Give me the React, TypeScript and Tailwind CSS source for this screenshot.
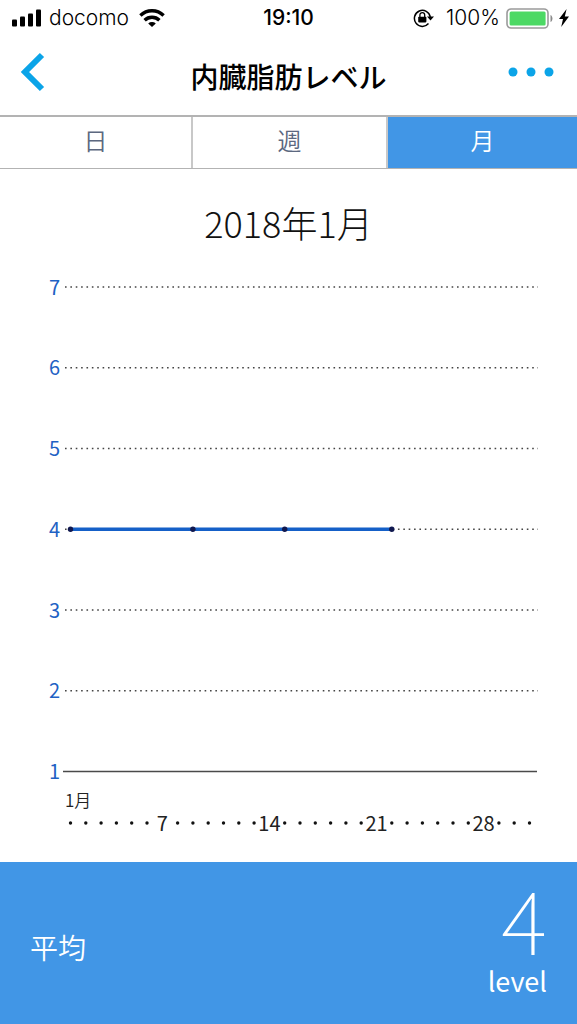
import { useState } from 'react'

const TABS = ['日', '週', '月']

const LEVELS = [7, 6, 5, 4, 3, 2, 1]
const DAYS = Array.from({ length: 31 }, (_, i) => i + 1)

const READINGS = [
  { day: 1, level: 4 },
  { day: 9, level: 4 },
  { day: 15, level: 4 },
  { day: 22, level: 4 },
]

const dayX = (day: number) => 70.5 + (day - 1) * 15.3
const levelY = (level: number) => 27 + (7 - level) * 80.75

function StatusBar() {
  return (
    <div className="grid h-9 grid-cols-[1fr_auto_1fr] items-center px-2 font-['Inter',sans-serif] text-[21px] leading-6 text-black">
      <div className="flex items-center gap-2 pl-1">
        <svg width="29" height="18" viewBox="0 0 29 18" aria-hidden="true">
          <rect x="0" y="10.5" width="5" height="7" rx="1" />
          <rect x="8" y="7.5" width="5" height="10" rx="1" />
          <rect x="16" y="4.5" width="5" height="13" rx="1" />
          <rect x="24" y="0.5" width="5" height="17" rx="1" />
        </svg>
        <span className="font-[350]">docomo</span>
        <svg width="26" height="18" viewBox="0 0 26 18" className="ml-0.5" fill="none" stroke="#000" strokeWidth="3.4" aria-hidden="true">
          <path d="M1.4 6.5a16.6 16.6 0 0 1 23.2 0" />
          <path d="M5.6 11.2a10.6 10.6 0 0 1 14.8 0" />
          <path d="M9.2 14.4a5.6 5.6 0 0 1 7.6 0L13 18z" fill="#000" stroke="none" />
        </svg>
      </div>
      <span className="font-medium">19:10</span>
      <div className="flex items-center justify-end gap-1.5">
        <svg width="21" height="20" viewBox="0 0 21 20" className="mr-1.5" aria-hidden="true">
          <path d="M15.5 15.6A8 8 0 1 1 17.3 9" fill="none" stroke="#000" strokeWidth="1.5" />
          <path d="M14 8.6h7l-3.5 4z" />
          <rect x="5.2" y="8.8" width="8.2" height="5.6" rx="0.8" />
          <path d="M6.9 9V7a2.4 2.4 0 0 1 4.8 0v2" fill="none" stroke="#000" strokeWidth="1.3" />
        </svg>
        <span className="font-[350]">100%</span>
        <svg width="47" height="21" viewBox="0 0 47 21" aria-hidden="true">
          <rect x="1" y="1" width="41" height="19" rx="4" fill="#fff" stroke="#9b9b9b" strokeWidth="1.6" />
          <rect x="3.6" y="3.6" width="36" height="14" rx="1.5" fill="#4cd964" />
          <path d="M44.5 7c2.6 1 2.6 6 0 7z" fill="#8a8a8a" />
        </svg>
        <svg width="10" height="18" viewBox="0 0 10 18" aria-hidden="true">
          <path d="M7.6 0 0 10h4L2.2 18 10 7.4H5.8z" />
        </svg>
      </div>
    </div>
  )
}

function LevelChart() {
  const points = READINGS.map((r) => `${dayX(r.day)},${levelY(r.level)}`).join(' ')

  return (
    <svg viewBox="0 0 577 602" className="block w-full" role="img" aria-label="内臓脂肪レベル">
      {LEVELS.map((level) => (
        <g key={level}>
          <text x="60" y={levelY(level) + 7.5} textAnchor="end" fontSize="20" fill="#1f62c4">
            {level}
          </text>
          {level === 1 ? (
            <line x1="63" x2="537" y1={levelY(level)} y2={levelY(level)} stroke="#4a4a4a" strokeWidth="1.4" />
          ) : (
            <line
              x1="65"
              x2="538"
              y1={levelY(level)}
              y2={levelY(level)}
              stroke="#444"
              strokeWidth="1.6"
              strokeDasharray="1.6 3.77"
            />
          )}
        </g>
      ))}

      <polyline points={points} fill="none" stroke="#1560c8" strokeWidth="3.6" />
      {READINGS.map((r) => (
        <circle key={r.day} cx={dayX(r.day)} cy={levelY(r.level)} r="2.7" fill="#10184f" />
      ))}

      <text x="65" y="547" fontSize="17" fontWeight="350" fill="#222">
        1月
      </text>
      {DAYS.map((day) =>
        day % 7 === 0 ? (
          <text key={day} x={dayX(day)} y="571" textAnchor="middle" fontSize="20" fill="#222">
            {day}
          </text>
        ) : (
          <circle key={day} cx={dayX(day)} cy="563" r="1.7" fill="#111" />
        ),
      )}
    </svg>
  )
}

export default function App() {
  const [tab, setTab] = useState('月')

  return (
    <div className="flex min-h-screen flex-col bg-white font-['Noto_Sans_CJK_JP',sans-serif]">
      <StatusBar />

      <header className="grid h-[79px] grid-cols-[1fr_auto_1fr] items-center px-5">
        <button type="button" aria-label="戻る" className="mb-2 justify-self-start">
          <svg width="25" height="40" viewBox="0 0 25 40" fill="none" stroke="#0ba4e8" strokeWidth="6">
            <path d="M22 3 5 20l17 17" />
          </svg>
        </button>
        <h1 className="text-[28px] leading-10 font-medium text-black">内臓脂肪レベル</h1>
        <button type="button" aria-label="メニュー" className="mb-2 justify-self-end">
          <svg width="50" height="10" viewBox="0 0 50 10" fill="#0ba4e8">
            <circle cx="6" cy="5" r="4.5" />
            <circle cx="24" cy="5" r="4.5" />
            <circle cx="42" cy="5" r="4.5" />
          </svg>
        </button>
      </header>

      <nav className="grid h-[54px] grid-cols-[191fr_195fr_191fr] border-t-2 border-b border-[#b3b3b3]">
        {TABS.map((t) => (
          <button
            key={t}
            type="button"
            onClick={() => setTab(t)}
            className={
              t === tab
                ? 'border-l-2 border-[#c8c8c8] bg-[#4196e6] pb-1.5 text-2xl font-[350] text-white first:border-l-0'
                : 'border-l-2 border-[#c8c8c8] pb-1.5 text-2xl font-[350] text-[#5c6880] first:border-l-0'
            }
          >
            {t}
          </button>
        ))}
      </nav>

      <main className="flex-1">
        <h2 className="pt-[29px] pb-[14px] text-center text-4xl leading-12 font-light text-[#111]">2018年1月</h2>
        <LevelChart />
      </main>

      <footer className="flex h-[162px] items-center justify-between bg-[#4196e6] px-[30px] text-white">
        <span className="pt-2 text-[28px] leading-10 font-[350]">平均</span>
        <div className="flex flex-col items-end pb-2.5">
          <span className="text-[88px] leading-20 font-thin">4</span>
          <span className="mt-1.5 text-[27px] leading-9">level</span>
        </div>
      </footer>
    </div>
  )
}
